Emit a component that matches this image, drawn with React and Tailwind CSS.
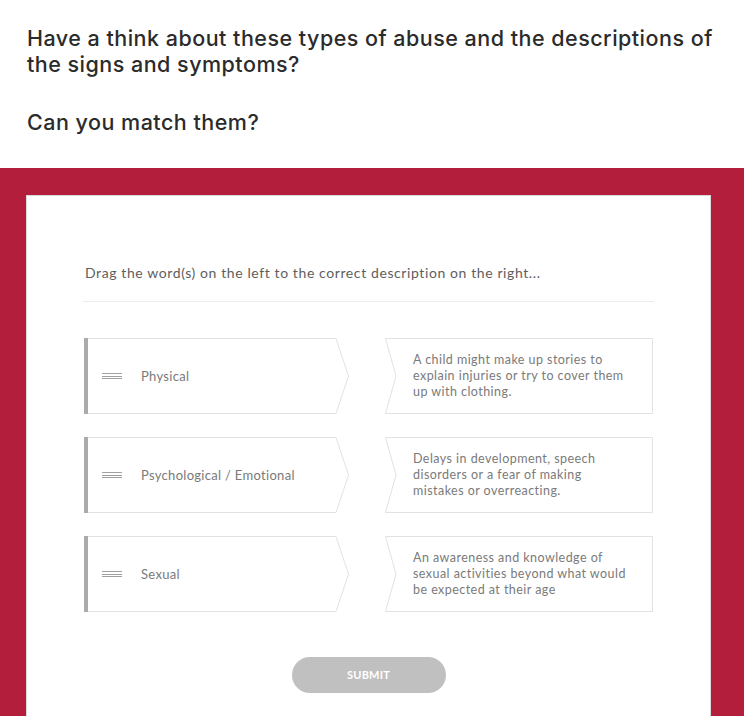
import React from "react";

const pairs = [
  {
    left: "Physical",
    right: ["A child might make up stories to", "explain injuries or try to cover them", "up with clothing."],
  },
  {
    left: "Psychological / Emotional",
    right: ["Delays in development, speech", "disorders or a fear of making", "mistakes or overreacting."],
  },
  {
    left: "Sexual",
    right: ["An awareness and knowledge of", "sexual activities beyond what would", "be expected at their age"],
  },
];

function LeftItem({ label }) {
  return (
    <div className="relative w-[265px] h-[76px] flex items-center">
      <svg className="absolute inset-0" width="265" height="76" viewBox="0 0 265 76">
        <polygon points="0.5,0.5 252,0.5 264.5,38 252,75.5 0.5,75.5" fill="#ffffff" stroke="#e2e2e2" strokeWidth="1" />
        <rect x="0" y="0" width="4" height="76" fill="#ababab" />
      </svg>
      <div className="relative flex items-center pl-[18px]">
        <div className="flex flex-col gap-[1.6px] w-[20px]">
          <div className="h-px bg-[#a0a0a0]" />
          <div className="h-px bg-[#a0a0a0]" />
          <div className="h-px bg-[#a0a0a0]" />
        </div>
        <span className="ml-[19px] text-[13px] tracking-[0.3px] text-[#7a7a7a] font-['Lato',sans-serif] leading-none">{label}</span>
      </div>
    </div>
  );
}

function RightItem({ lines }) {
  return (
    <div className="relative w-[268px] h-[76px] flex items-center">
      <svg className="absolute inset-0" width="268" height="76" viewBox="0 0 268 76">
        <polygon points="0.5,0.5 267.5,0.5 267.5,75.5 0.5,75.5 11,38" fill="#ffffff" stroke="#e2e2e2" strokeWidth="1" />
      </svg>
      <p className="relative pl-[28px] text-[12.5px] leading-[16px] tracking-[0.45px] text-[#7a7a7a] font-['Lato',sans-serif]">
        {lines.map((l, i) => (
          <span key={i} className="block">{l}</span>
        ))}
      </p>
    </div>
  );
}

export default function App() {
  return (
    <div className="w-full bg-white min-h-[716px] overflow-hidden">
      <div className="px-[27px] pt-[25px] pb-[33px] text-[#2b2b2b] font-['Inter',sans-serif] font-medium text-[21.5px] leading-[26px] tracking-[0.48px]">
        <p>Have a think about these types of abuse and the descriptions of the signs and symptoms?</p>
        <p className="mt-[32px]">Can you match them?</p>
      </div>
      <div className="bg-[#b31e3c] pt-[27px] pl-[26px] pr-[33px] h-[549px]">
        <div className="bg-white border border-[#d9d9d9] border-b-0 h-full px-[56px] pt-[67px]">
          <div className="border-b border-[#ececec] pb-[18px]">
            <p className="pl-[2px] text-[14px] leading-[20px] tracking-[0.6px] text-[#5e5e5e] font-['Lato',sans-serif]">
              Drag the word(s) on the left to the correct description on the right...
            </p>
          </div>
          <div className="mt-[36px] px-[1px] flex flex-col gap-[23px]">
            {pairs.map((p, i) => (
              <div key={i} className="flex justify-between">
                <LeftItem label={p.left} />
                <RightItem lines={p.right} />
              </div>
            ))}
          </div>
          <div className="mt-[45px] flex justify-center">
            <button className="w-[154px] h-[36px] rounded-full bg-[#c0c0c0] text-white text-[11px] font-bold font-['Lato',sans-serif] tracking-[0.2px]">
              SUBMIT
            </button>
          </div>
        </div>
      </div>
    </div>
  );
}
